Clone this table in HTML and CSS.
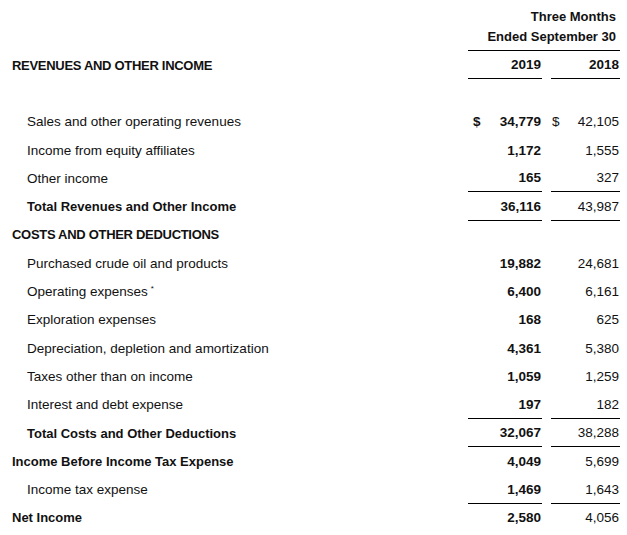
FILE: index.html
```html
<!DOCTYPE html>
<html>
<head>
<meta charset="utf-8">
<link rel="stylesheet" href="styles.css">
</head>
<body>
<div class="stmt">
  <div class="head">
    <div class="head-title">Three Months<br>Ended September 30</div>
  </div>
  <div class="row">
    <div class="label sec">REVENUES AND OTHER INCOME</div>
    <div class="num b rule">2019</div>
    <div class="num b rule">2018</div>
  </div>
  <div class="row"><div class="label"></div><div></div><div></div></div>
  <div class="row">
    <div class="label ind">Sales and other operating revenues</div>
    <div class="num b cur"><span>$</span>34,779</div>
    <div class="num cur cur-r"><span>$</span>42,105</div>
  </div>
  <div class="row">
    <div class="label ind">Income from equity affiliates</div>
    <div class="num b">1,172</div>
    <div class="num">1,555</div>
  </div>
  <div class="row">
    <div class="label ind">Other income</div>
    <div class="num b rule">165</div>
    <div class="num rule">327</div>
  </div>
  <div class="row">
    <div class="label ind bl">Total Revenues and Other Income</div>
    <div class="num b rule">36,116</div>
    <div class="num rule">43,987</div>
  </div>
  <div class="row">
    <div class="label sec">COSTS AND OTHER DEDUCTIONS</div>
    <div></div><div></div>
  </div>
  <div class="row">
    <div class="label ind">Purchased crude oil and products</div>
    <div class="num b">19,882</div>
    <div class="num">24,681</div>
  </div>
  <div class="row">
    <div class="label ind">Operating expenses<sup>*</sup></div>
    <div class="num b">6,400</div>
    <div class="num">6,161</div>
  </div>
  <div class="row">
    <div class="label ind">Exploration expenses</div>
    <div class="num b">168</div>
    <div class="num">625</div>
  </div>
  <div class="row">
    <div class="label ind">Depreciation, depletion and amortization</div>
    <div class="num b">4,361</div>
    <div class="num">5,380</div>
  </div>
  <div class="row">
    <div class="label ind">Taxes other than on income</div>
    <div class="num b">1,059</div>
    <div class="num">1,259</div>
  </div>
  <div class="row">
    <div class="label ind">Interest and debt expense</div>
    <div class="num b rule">197</div>
    <div class="num rule">182</div>
  </div>
  <div class="row">
    <div class="label ind bl">Total Costs and Other Deductions</div>
    <div class="num b rule">32,067</div>
    <div class="num rule">38,288</div>
  </div>
  <div class="row">
    <div class="label bl">Income Before Income Tax Expense</div>
    <div class="num b">4,049</div>
    <div class="num">5,699</div>
  </div>
  <div class="row">
    <div class="label ind">Income tax expense</div>
    <div class="num b rule">1,469</div>
    <div class="num rule">1,643</div>
  </div>
  <div class="row">
    <div class="label bl">Net Income</div>
    <div class="num b">2,580</div>
    <div class="num">4,056</div>
  </div>
</div>
</body>
</html>
```
FILE: styles.css
```css
html, body {
  margin: 0;
  padding: 0;
  background: #fff;
}
body {
  font-family: "Liberation Sans", Arial, sans-serif;
  font-size: 13.5px;
  color: #111;
}
.stmt {
  padding: 7px 7px 0 12px;
}
.head {
  display: grid;
  grid-template-columns: 1fr 152px;
}
.head-title {
  grid-column: 2;
  text-align: right;
  font-weight: bold;
  font-size: 13px;
  line-height: 20px;
  padding-right: 4px;
  padding-bottom: 3px;
  border-bottom: 1px solid #000;
}
.row {
  display: grid;
  grid-template-columns: 1fr 74px 69px;
  column-gap: 9px;
  height: 28.3px;
}
.row > div {
  display: flex;
  align-items: center;
}
.label.ind {
  padding-left: 15px;
}
.sec {
  font-weight: bold;
  font-size: 13px;
  letter-spacing: -0.3px;
}
.bl {
  font-weight: bold;
  font-size: 13px;
}
.b {
  font-weight: bold;
}
.num {
  justify-content: flex-end;
  padding-right: 1px;
}
.num.cur {
  justify-content: space-between;
}
.num.cur span {
  padding-left: 5px;
}
.num.cur-r span {
  padding-left: 1px;
}
.rule {
  border-bottom: 1px solid #000;
}
sup {
  font-size: 8px;
  align-self: flex-start;
  margin-top: 7px;
  margin-left: 3px;
}
```
